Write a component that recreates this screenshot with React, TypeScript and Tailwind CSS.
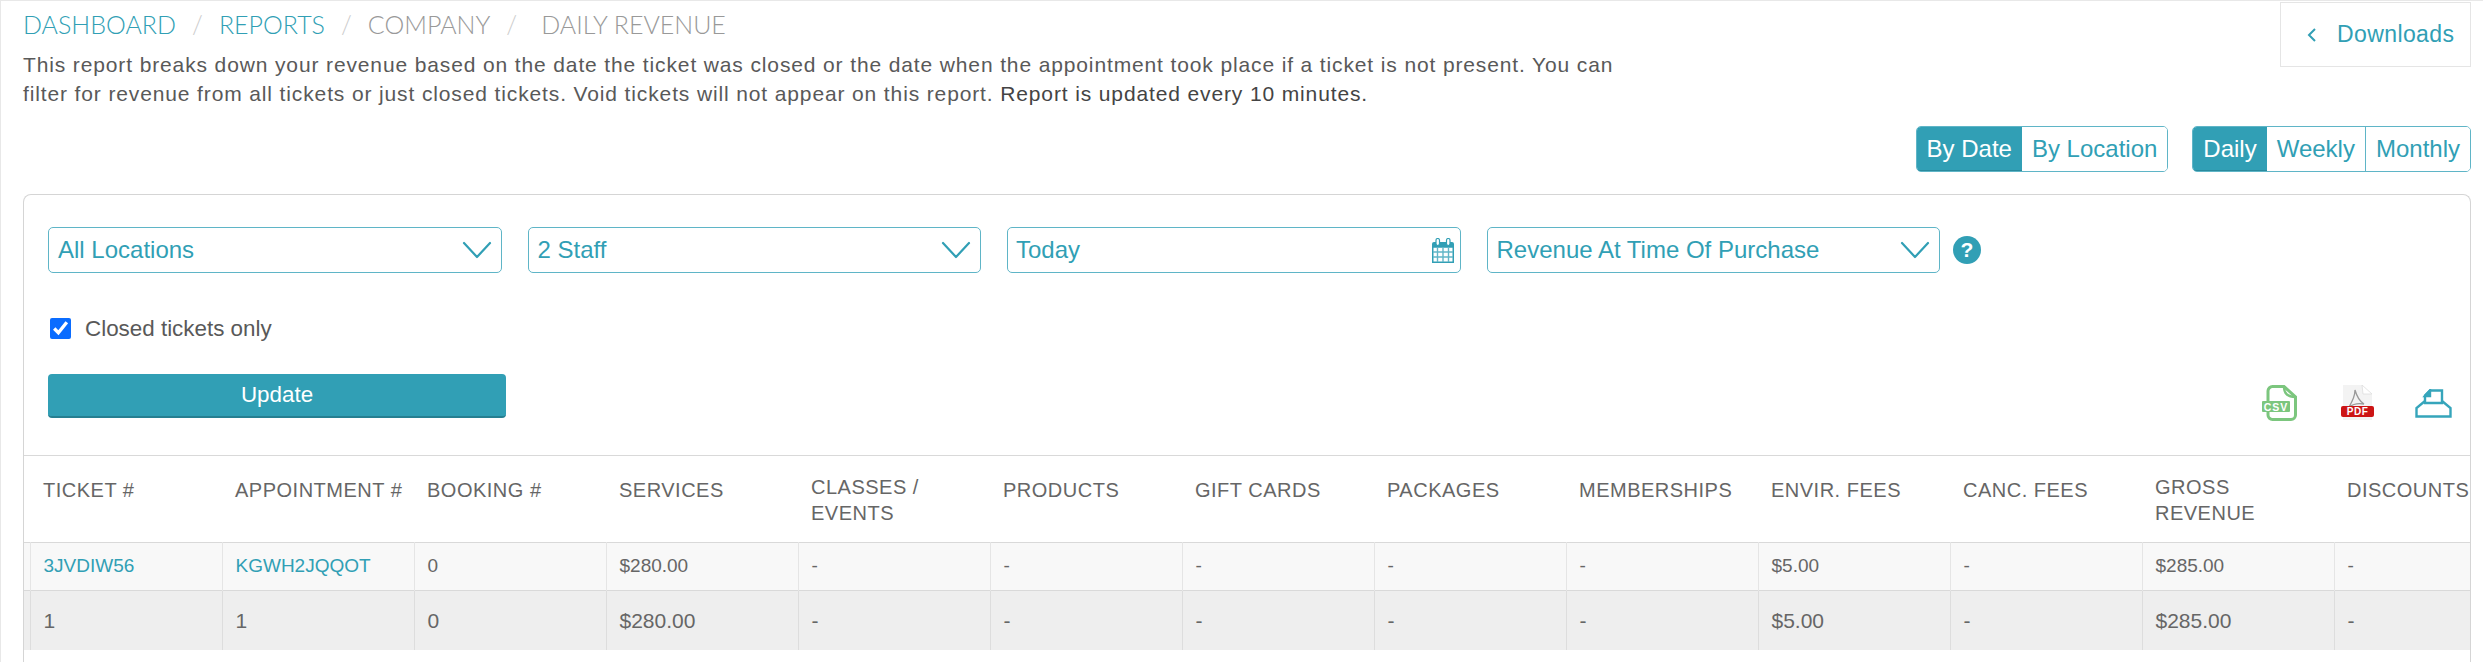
import React from "react";

function Chevron() {
  return (
    <svg width="30" height="18" viewBox="0 0 30 18" fill="none" className="shrink-0">
      <path d="M2 2 L15 16 L28 2" stroke="#319fb5" strokeWidth="2.2" strokeLinecap="round" strokeLinejoin="round" />
    </svg>
  );
}

function Select({ label, className }: { label: string; className: string }) {
  return (
    <div className={`h-[46px] w-[453.5px] flex items-center justify-between pl-[9px] pr-[9px] border border-[#5fb5c7] rounded-[5px] text-[#319fb5] text-[24px] ${className}`}>
      <span>{label}</span>
      <Chevron />
    </div>
  );
}

function Calendar() {
  return (
    <svg width="22" height="25" viewBox="0 0 22 25" fill="none">
      <path d="M2 4 H20 a2 2 0 0 1 2 2 V10 H0 V6 a2 2 0 0 1 2 -2 Z" fill="#319fb5" />
      <rect x="4" y="0.5" width="3.5" height="7" rx="1.75" fill="#ffffff" stroke="#319fb5" strokeWidth="1.2" />
      <rect x="14.5" y="0.5" width="3.5" height="7" rx="1.75" fill="#ffffff" stroke="#319fb5" strokeWidth="1.2" />
      <rect x="0.75" y="9" width="20.5" height="15.25" fill="#ffffff" stroke="#319fb5" strokeWidth="1.5" />
      <path d="M5.5 10v14M11 10v14M16.5 10v14M1 14h20M1 19h20" stroke="#62b6c8" strokeWidth="1.4" />
    </svg>
  );
}

const headers = [
  "TICKET #",
  "APPOINTMENT #",
  "BOOKING #",
  "SERVICES",
  "CLASSES /\nEVENTS",
  "PRODUCTS",
  "GIFT CARDS",
  "PACKAGES",
  "MEMBERSHIPS",
  "ENVIR. FEES",
  "CANC. FEES",
  "GROSS\nREVENUE",
  "DISCOUNTS",
];
const row1 = ["3JVDIW56", "KGWH2JQQOT", "0", "$280.00", "-", "-", "-", "-", "-", "$5.00", "-", "$285.00", "-"];
const row2 = ["1", "1", "0", "$280.00", "-", "-", "-", "-", "-", "$5.00", "-", "$285.00", "-"];

function Seg({ label, active, last }: { label: string; active?: boolean; last?: boolean }) {
  return (
    <div
      className={`h-full flex items-center px-[10px] ${active ? "bg-[#319fb5] text-white border-b border-[#2a8a9d]" : "text-[#319fb5] bg-white"} ${last || active ? "" : "border-r border-[#5fb5c7]"}`}
    >
      {label}
    </div>
  );
}

export default function App() {
  return (
    <div className="w-[2483px] h-[662px] overflow-hidden bg-white border-l border-t border-[#e8e8e8] pr-[12px] pl-[22px] font-['Liberation_Sans',sans-serif]">
      <div className="flex justify-between items-start h-[108px]">
        <div>
          <div className="flex items-center pt-[11px] h-[37px] font-['Lato',sans-serif] font-light text-[25px] text-[#999999]">
            <span className="text-[#319fb5]">DASHBOARD</span>
            <span className="mx-[16px] text-[#cccccc]">/</span>
            <span className="text-[#319fb5]">REPORTS</span>
            <span className="mx-[16px] text-[#cccccc]">/</span>
            <span>COMPANY</span>
            <span className="ml-[16px] mr-[24px] text-[#cccccc]">/</span>
            <span>DAILY REVENUE</span>
          </div>
          <p className="mt-[12px] w-[1700px] text-[21px] leading-[29px] tracking-[0.87px] text-[#595959]">
            This report breaks down your revenue based on the date the ticket was closed or the date when the appointment took place if a ticket is not present. You can<br />filter for revenue from all tickets or just closed tickets. Void tickets will not appear on this report. <span className="text-[#444444]">Report is updated every 10 minutes.</span>
          </p>
        </div>
        <div className="w-[191px] h-[65px] mt-[1px] border border-[#e5e5e5] flex items-center pl-[26px] text-[#319fb5] text-[23px] tracking-[0.4px]">
          <svg width="10" height="16" viewBox="0 0 10 16" fill="none" stroke="#319fb5" strokeWidth="2" className="mr-[20px]"><path d="M8 2 L2 8 L8 14" /></svg>
          Downloads
        </div>
      </div>

      <div className="flex justify-end gap-[24px] mt-[17px] h-[46px] text-[24px]">
        <div className="flex h-full border border-[#5fb5c7] rounded-[5px] overflow-hidden">
          <Seg label="By Date" active />
          <Seg label="By Location" last />
        </div>
        <div className="flex h-full border border-[#5fb5c7] rounded-[5px] overflow-hidden">
          <Seg label="Daily" active />
          <Seg label="Weekly" />
          <Seg label="Monthly" last />
        </div>
      </div>

      <div className="mt-[22px] h-[480px] border border-b-0 border-[#d5d5d5] rounded-t-[8px] overflow-hidden">
        <div className="pt-[32px] pl-[24px] pr-[18px] h-[261px] border-b border-[#d9d9d9]">
          <div className="flex items-center">
            <Select label="All Locations" className="mr-[26px]" />
            <Select label="2 Staff" className="mr-[26px]" />
            <div className="w-[453.5px] mr-[26px] h-[46px] flex items-center justify-between pl-[8px] pr-[6px] border border-[#5fb5c7] rounded-[5px] text-[#319fb5] text-[24px]">
              <span>Today</span>
              <Calendar />
            </div>
            <Select label="Revenue At Time Of Purchase" className="mr-[13px]" />
            <div className="w-[28px] h-[28px] rounded-full bg-[#319fb5] text-white font-bold text-[21px] flex items-center justify-center">?</div>
          </div>
          <label className="flex items-center mt-[43px] ml-[2px] text-[22.4px] leading-[25px] text-[#595959]">
            <input type="checkbox" defaultChecked readOnly className="w-[21px] h-[21px] mr-[14px] accent-[#0a6cff]" />
            Closed tickets only
          </label>
          <div className="flex justify-between items-end mt-[33px]">
            <div className="w-[458px] h-[44px] rounded-[4px] bg-[#319fb5] border-b-2 border-[#267f91] text-white text-[22.4px] flex items-center justify-center">Update</div>
            <div className="flex items-center mb-[-3px]">
              <svg width="35" height="36" viewBox="0 0 35 36" fill="none" className="mr-[44px]">
                <path d="M6 16 V6 a4.5 4.5 0 0 1 4.5 -4.5 H22 L33.5 12 V30 a4.5 4.5 0 0 1 -4.5 4.5 H10.5 a4.5 4.5 0 0 1 -4.5 -4.5 V27" stroke="#7cc67e" strokeWidth="3" />
                <path d="M22 1.5 C22 8 25 12 33.5 12" stroke="#7cc67e" strokeWidth="2.4" />
                <rect x="0" y="16" width="28" height="11" rx="1" fill="#7cc67e" />
                <text x="14" y="25.5" textAnchor="middle" fontFamily="Liberation Sans" fontWeight="700" fontSize="10.5" letterSpacing="1" fill="#ffffff">CSV</text>
              </svg>
              <svg width="33" height="36" viewBox="0 0 33 36" fill="none" className="mr-[41px]">
                <path d="M2 0 H21 L31 10 V35 H2 Z" fill="#f3f3f3" />
                <path d="M21 0 L22 9 H31 Z" fill="#ffffff" stroke="#dddddd" strokeWidth="0.8" />
                <path d="M14 5 C16 12 18 16 23 19 C18 18 12 19 8 22 C11 17 14 12 14 5 Z" stroke="#999999" strokeWidth="1.3" fill="none" />
                <rect x="0" y="21" width="33" height="11" fill="#cc1414" rx="2" />
                <text x="16.5" y="30.3" textAnchor="middle" fontFamily="Liberation Sans" fontWeight="700" fontSize="10" letterSpacing="0.5" fill="#ffffff">PDF</text>
              </svg>
              <svg width="37" height="29" viewBox="0 0 37 29" fill="none" stroke="#36a5bb" strokeWidth="2.4">
                <path d="M10 12 L1.5 19 V27.5 H35.5 V19 L27 12" />
                <path d="M10 14 V6.5 L15 1.5 H27 V14 H10 Z" />
                <path d="M15 1.5 V7 H10 Z" fill="#36a5bb" />
              </svg>
            </div>
          </div>
        </div>
        <table className="table-fixed border-collapse w-[2502px]">
          <colgroup>
            <col className="w-[6px]" />
            {headers.map((h) => (
              <col key={h} className="w-[192px]" />
            ))}
          </colgroup>
          <thead>
            <tr className="h-[86px] text-[20px] tracking-[0.5px] text-[#666666]">
              <th className="p-0" />
              {headers.map((h) => (
                <th key={h} className={`font-normal text-left pl-[13px] leading-[26px] align-top whitespace-pre ${h.includes("\n") ? "pt-[18px]" : "pt-[21px]"}`}>
                  {h}
                </th>
              ))}
            </tr>
          </thead>
          <tbody>
            <tr className="h-[48px] bg-[#f8f8f8] text-[19px] text-[#666666] border-t border-[#d9d9d9]">
              <td className="p-0 border-r border-[#e5e5e5]" />
              {row1.map((c, i) => (
                <td key={i} className={`pl-[13px] border-r border-[#e5e5e5] ${i < 2 ? "text-[#319fb5]" : ""}`}>
                  {c}
                </td>
              ))}
            </tr>
            <tr className="h-[60px] bg-[#eeeeee] text-[21px] text-[#666666] border-t border-[#d9d9d9]">
              <td className="p-0 border-r border-[#dddddd]" />
              {row2.map((c, i) => (
                <td key={i} className="pl-[13px] border-r border-[#dddddd]">
                  {c}
                </td>
              ))}
            </tr>
          </tbody>
        </table>
      </div>
    </div>
  );
}
